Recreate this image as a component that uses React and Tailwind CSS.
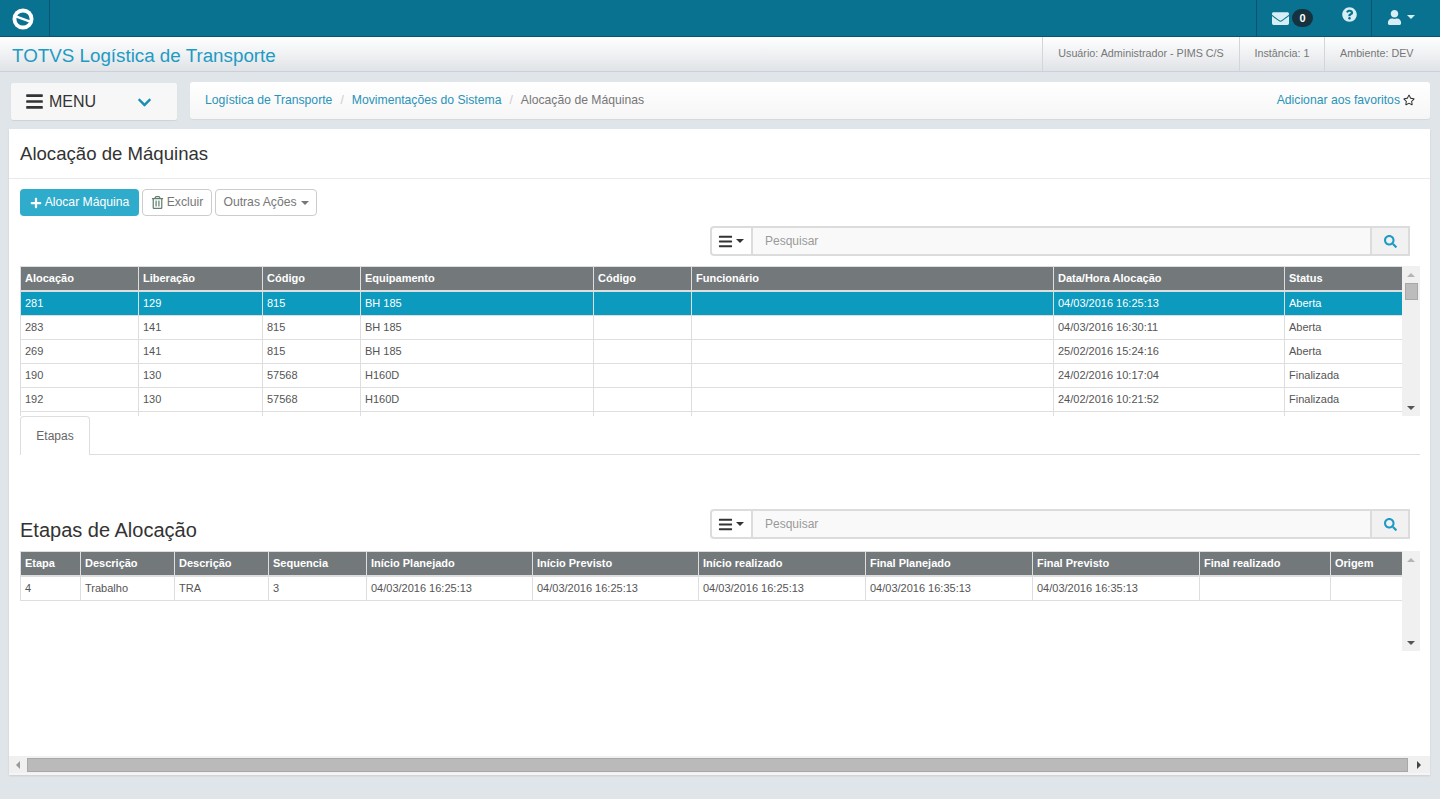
import React from 'react';
import { FaEnvelope, FaQuestionCircle, FaUser, FaPlus, FaRegTrashAlt, FaBars, FaSearch, FaChevronDown, FaRegStar } from 'react-icons/fa';

const caret = 'inline-block w-0 h-0 border-x-[4px] border-x-transparent border-t-[4px]';

const alocCols = [118, 124, 98, 233, 98, 362, 231, 118];
const alocHead = ['Alocação', 'Liberação', 'Código', 'Equipamento', 'Código', 'Funcionário', 'Data/Hora Alocação', 'Status'];
const alocRows = [
  ['281', '129', '815', 'BH 185', '', '', '04/03/2016 16:25:13', 'Aberta'],
  ['283', '141', '815', 'BH 185', '', '', '04/03/2016 16:30:11', 'Aberta'],
  ['269', '141', '815', 'BH 185', '', '', '25/02/2016 15:24:16', 'Aberta'],
  ['190', '130', '57568', 'H160D', '', '', '24/02/2016 10:17:04', 'Finalizada'],
  ['192', '130', '57568', 'H160D', '', '', '24/02/2016 10:21:52', 'Finalizada'],
  ['', '', '', '', '', '', '', ''],
];

const etapaCols = [60, 94, 94, 98, 166, 166, 167, 167, 167, 131, 72];
const etapaHead = ['Etapa', 'Descrição', 'Descrição', 'Sequencia', 'Início Planejado', 'Início Previsto', 'Início realizado', 'Final Planejado', 'Final Previsto', 'Final realizado', 'Origem'];
const etapaRows = [
  ['4', 'Trabalho', 'TRA', '3', '04/03/2016 16:25:13', '04/03/2016 16:25:13', '04/03/2016 16:25:13', '04/03/2016 16:35:13', '04/03/2016 16:35:13', '', ''],
];

const TotvsLogo = () => (
  <svg width="22" height="22" viewBox="0 0 22 22">
    <circle cx="11" cy="11" r="10.5" fill="#fff" />
    <circle cx="11" cy="11" r="6.6" fill="#0a7291" />
    <path d="M3.5 7 L18.5 12.4 L18.5 15 L3.5 9.6 Z" fill="#fff" />
  </svg>
);

const SearchBar = () => (
  <div className="flex w-[700px] h-[30px]">
    <button className="w-[43px] flex items-center justify-center gap-[3px] pr-[2px] bg-white border-2 border-[#dcdcdc] rounded-l-[4px] text-[#333]">
      <FaBars size={15} />
      <span className={`${caret} border-t-[#333]`} />
    </button>
    <div className="flex-1 bg-[#f9f9f9] border-y-2 border-[#dcdcdc] pl-[12px] flex items-center text-[12px] text-[#999]">Pesquisar</div>
    <button className="w-[40px] flex items-center justify-center bg-[#f1f1f1] border-2 border-[#dcdcdc] text-[#1d9bc4]">
      <FaSearch size={13} />
    </button>
  </div>
);

const VScroll = ({ thumb }) => (
  <div className="w-[18px] bg-[#f0f0f0] flex flex-col items-center">
    <span className="mt-[7px] w-0 h-0 border-x-[4px] border-x-transparent border-b-[4px] border-b-[#b4b4b4]" />
    {thumb && <span className="mt-[6px] w-[13px] h-[17px] bg-[#bcbcbc] border border-[#a8a8a8]" />}
    <span className="mt-auto mb-[6px] w-0 h-0 border-x-[4px] border-x-transparent border-t-[4px] border-t-[#555]" />
  </div>
);

const DataTable = ({ cols, head, rows, selected, height }) => (
  <div className="flex" style={{ height }}>
    <div className="w-[1382px] bg-white overflow-hidden">
      <table className="table-fixed border-separate border-spacing-0 w-[1382px] text-[11px] leading-[14px]">
        <colgroup>
          {cols.map((w, i) => <col key={i} style={{ width: w }} />)}
        </colgroup>
        <thead>
          <tr className="h-[26px] bg-[#73797b] text-white">
            {head.map((h, i) => (
              <th key={i} className="border-t border-b-2 border-l border-[#dedede] pl-[4px] pb-[1px] text-left font-bold whitespace-nowrap">{h}</th>
            ))}
          </tr>
        </thead>
        <tbody>
          {rows.map((row, r) => (
            <tr key={r} className={r === selected ? 'h-[24px] bg-[#0c9abe] text-white' : 'h-[24px] bg-white text-[#555]'}>
              {row.map((c, i) => (
                <td key={i} className="border-b border-l border-[#dedede] pl-[4px] pb-[2px] whitespace-nowrap">{c}</td>
              ))}
            </tr>
          ))}
        </tbody>
      </table>
    </div>
    <VScroll thumb={selected === 0} />
  </div>
);

export default function App() {
  return (
    <div className="w-[1440px] h-[799px] overflow-hidden bg-[#e0e5e9] font-['Liberation_Sans',Arial,sans-serif]">
      {/* Top bar */}
      <div className="h-[37px] bg-[#0a7291] border-b border-[#07566e] flex text-white">
        <div className="w-[50px] flex items-center justify-center border-r border-[#07566e] pr-[4px] pt-[1px]">
          <TotvsLogo />
        </div>
        <div className="flex-1" />
        <div className="w-[71px] flex items-center justify-center gap-[3px] border-l border-[#07566e] pl-[1px]">
          <FaEnvelope size={17} className="text-[#d8eef5]" />
          <span className="w-[21px] h-[18px] rounded-full bg-[#15323e] text-[11px] font-bold flex items-center justify-center">0</span>
        </div>
        <div className="w-[44px] flex justify-center pt-[7px] h-[29px]">
          <FaQuestionCircle size={15} className="text-[#d8eef5]" />
        </div>
        <div className="w-[69px] flex items-center gap-[5px] border-l border-[#07566e] pl-[15px] pb-[2px]">
          <FaUser size={15} className="text-[#d8eef5]" />
          <span className={`${caret} border-t-[#d8eef5]`} />
        </div>
      </div>

      {/* Title bar */}
      <div className="h-[35px] bg-gradient-to-b from-white to-[#e0e3e7] border-b border-[#cdd0d8] flex items-stretch">
        <div className="flex-1 pl-[12px] pt-[8px] text-[18.8px] leading-[22px] text-[#1e9bc3]">TOTVS Logística de Transporte</div>
        <div className="w-[197px] border-l border-[#d2d5d9] flex items-center justify-center text-[10.75px] text-[#777] pb-[2px]">Usuário: Administrador - PIMS C/S</div>
        <div className="w-[85px] border-l border-[#d2d5d9] flex items-center justify-center text-[10.75px] text-[#777] pb-[2px]">Instância: 1</div>
        <div className="w-[116px] border-l border-[#d2d5d9] pl-[15px] flex items-center text-[10.75px] text-[#777] pb-[2px]">Ambiente: DEV</div>
      </div>

      {/* Menu + breadcrumb */}
      <div className="flex gap-[13px] pl-[11px] pr-[10px] pt-[10px]">
        <div className="w-[166px] h-[37px] mt-[1px] rounded-[2px] bg-[#f7f7f7] shadow-[0_1px_1px_rgba(0,0,0,0.08)] flex items-center pl-[15px] text-[#333]">
          <FaBars size={19} className="-ml-[1px]" />
          <span className="ml-[5px] text-[16px]">MENU</span>
          <FaChevronDown size={15} className="ml-auto mr-[25px] mt-[2px] text-[#1a8fb6]" />
        </div>
        <div className="flex-1 h-[37px] rounded-[3px] bg-gradient-to-b from-white to-[#f6f6f6] shadow-[0_1px_1px_rgba(0,0,0,0.06)] flex items-center pl-[15px] pr-[15px] pb-[1px] text-[12.2px]">
          <span className="text-[#2a93b8]">Logística de Transporte</span>
          <span className="mx-[8px] text-[#ccc]">/</span>
          <span className="text-[#2a93b8]">Movimentações do Sistema</span>
          <span className="mx-[8px] text-[#ccc]">/</span>
          <span className="text-[#777]">Alocação de Máquinas</span>
          <span className="ml-auto text-[#2a93b8]">Adicionar aos favoritos</span>
          <FaRegStar size={12} className="ml-[3px] text-[#333]" />
        </div>
      </div>

      {/* Main panel */}
      <div className="ml-[9px] mt-[9px] w-[1421px] h-[646px] bg-white border-b-[2px] border-[#f5f5f5] shadow-[0_1px_2px_rgba(0,0,0,0.1)] flex flex-col">
        <div className="h-[50px] border-b border-[#e8eaee] pl-[11px] pt-[14px] text-[18.6px] leading-[22px] text-[#333]">Alocação de Máquinas</div>

        <div className="flex-1 pl-[11px] pr-[10px] pt-[10px]">
          <div className="flex gap-[3px] h-[27px] text-[12.2px]">
            <button className="w-[119px] rounded-[4px] bg-[#2fabcb] text-white flex items-center justify-center gap-[3px]">
              <FaPlus size={12} />
              Alocar Máquina
            </button>
            <button className="w-[70px] rounded-[4px] border border-[#ccc] bg-white text-[#777] flex items-center justify-center gap-[3px]">
              <FaRegTrashAlt size={13} className="text-[#5f7f6f]" />
              Excluir
            </button>
            <button className="w-[102px] rounded-[4px] border border-[#ccc] bg-white text-[#777] flex items-center justify-center gap-[4px]">
              Outras Ações
              <span className={`${caret} border-t-[#777]`} />
            </button>
          </div>

          <div className="flex justify-end pr-[10px] mt-[10px] mb-[10px]">
            <SearchBar />
          </div>

          <DataTable cols={alocCols} head={alocHead} rows={alocRows} selected={0} height={150} />

          {/* Tabs */}
          <div className="h-[39px] border-b border-[#dedede]">
            <div className="w-[70px] h-[39px] bg-white border border-b-0 border-[#dedede] rounded-t-[4px] flex items-center justify-center text-[12px] text-[#666]">Etapas</div>
          </div>

          <div className="flex items-end justify-between pr-[10px] mt-[54px] mb-[12px] h-[30px]">
            <h2 className="text-[20px] leading-[24px] text-[#333] mb-[-3px]">Etapas de Alocação</h2>
            <SearchBar />
          </div>

          <DataTable cols={etapaCols} head={etapaHead} rows={etapaRows} selected={-1} height={100} />
        </div>

        {/* Horizontal scrollbar */}
        <div className="h-[17px] bg-[#f0f0f0] flex items-center">
          <div className="w-[18px] flex justify-center">
            <span className="w-0 h-0 border-y-[4px] border-y-transparent border-r-[4px] border-r-[#999]" />
          </div>
          <div className="w-[1381px] h-[14px] bg-[#bababa] border border-[#a8a8a8]" />
          <div className="flex-1 flex justify-center">
            <span className="w-0 h-0 border-y-[4px] border-y-transparent border-l-[4px] border-l-[#444]" />
          </div>
        </div>
      </div>
    </div>
  );
}
